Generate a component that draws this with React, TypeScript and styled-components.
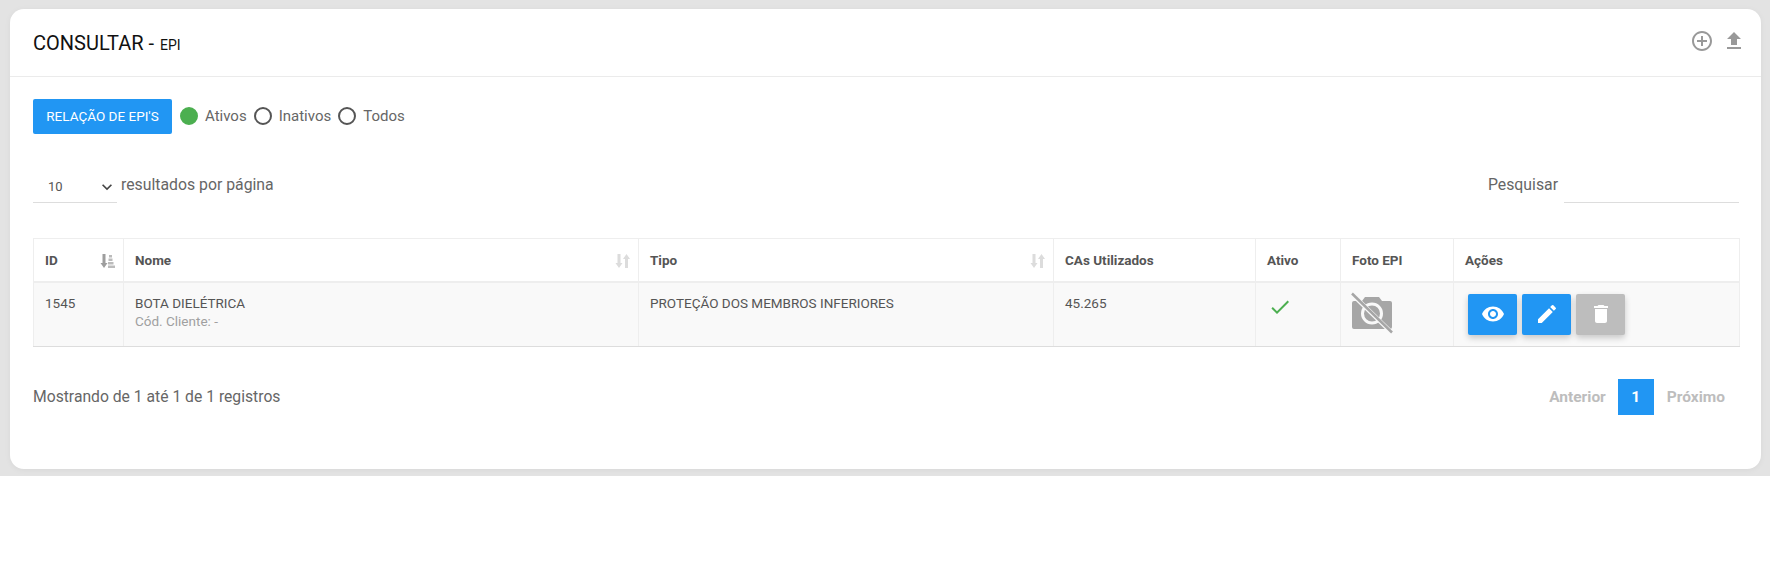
import React from "react";
import styled, { createGlobalStyle } from "styled-components";
import { MdAddCircleOutline, MdFileUpload, MdVisibility, MdEdit, MdDelete, MdCheck, MdKeyboardArrowDown } from "react-icons/md";

const GlobalStyle = createGlobalStyle`
  html, body {
    margin: 0;
    padding: 0;
    background: #ffffff;
  }
  body {
    font-family: Roboto, "Liberation Sans", sans-serif;
    color: #555555;
  }
  * {
    box-sizing: border-box;
  }
`;

const Page = styled.div`
  height: 476px;
  background: #e3e3e3;
  padding: 9px 9px 7px 10px;
`;

const Card = styled.div`
  height: 460px;
  background: #ffffff;
  border-radius: 14px;
  box-shadow: 0 1px 6px rgba(0, 0, 0, 0.05);
`;

const CardHeader = styled.div`
  height: 68px;
  padding: 0 15px 0 23px;
  display: flex;
  align-items: center;
  justify-content: space-between;
  border-bottom: 1px solid #ebebeb;
`;

const Title = styled.h1`
  margin: 0;
  font-size: 20px;
  font-weight: 400;
  color: #111111;

  small {
    margin-left: 1px;
    font-size: 14px;
  }
`;

const HeaderIcons = styled.div`
  display: flex;
  align-items: center;
  gap: 8px;
  margin-bottom: 3px;
  color: #999999;
`;

const CardBody = styled.div`
  padding: 21px 21px 0 23px;
`;

const FilterRow = styled.div`
  display: flex;
  align-items: center;
  height: 36px;
`;

const PrimaryButton = styled.button`
  width: 139px;
  height: 35px;
  margin-right: 8px;
  padding: 0;
  border: none;
  border-radius: 2px;
  background: #2196f3;
  color: #ffffff;
  font-family: inherit;
  font-size: 13.5px;
  font-weight: 400;
`;

const RadioOption = styled.label`
  display: flex;
  align-items: center;
  gap: 7px;
  margin-right: 7px;
  font-size: 15px;
  color: #666666;
`;

const RadioDot = styled.span<{ $checked?: boolean }>`
  width: 18px;
  height: 18px;
  border-radius: 50%;
  border: 2px solid ${(p) => (p.$checked ? "#4caf50" : "#555555")};
  background: ${(p) => (p.$checked ? "#4caf50" : "transparent")};
`;

const ControlsRow = styled.div`
  display: flex;
  justify-content: space-between;
  margin-top: 32px;
  height: 37px;
`;

const LengthControl = styled.div`
  display: flex;
  align-items: flex-start;
  font-size: 15.8px;
  color: #666666;
  line-height: 20px;
`;

const SelectBox = styled.div`
  width: 84px;
  height: 37px;
  margin-right: 4px;
  padding: 8px 0 0 15px;
  display: flex;
  justify-content: space-between;
  border-bottom: 1px solid #dddddd;
  font-size: 13px;
  line-height: 26px;
  color: #555555;
`;

const SelectArrow = styled.span`
  display: flex;
  align-items: center;
  height: 26px;
  color: #444444;
`;

const LengthText = styled.span`
  padding-top: 9px;
`;

const SearchControl = styled.div`
  display: flex;
  align-items: flex-start;
  margin-right: 1px;
  font-size: 15.8px;
  color: #666666;
  line-height: 20px;
`;

const SearchLabel = styled.span`
  padding-top: 9px;
  margin-right: 6px;
`;

const SearchInput = styled.div`
  width: 175px;
  height: 37px;
  border-bottom: 1px solid #dddddd;
`;

const Table = styled.table`
  width: 1706px;
  margin-top: 35px;
  border-collapse: collapse;
  table-layout: fixed;
`;

const HeadCell = styled.th<{ $width: number }>`
  position: relative;
  width: ${(p) => p.$width}px;
  height: 43px;
  padding: 0 11px;
  border: 1px solid #eeeeee;
  border-bottom: 2px solid #eeeeee;
  text-align: left;
  font-size: 13.5px;
  font-weight: 700;
  color: #555555;
  background: #ffffff;
`;

const SortMark = styled.span`
  position: absolute;
  right: 7px;
  top: 14px;
  display: flex;
`;

const BodyRow = styled.tr`
  background: #f9f9f9;
`;

const BodyCell = styled.td`
  height: 65px;
  padding: 11px 11px 0;
  vertical-align: top;
  border: 1px solid #eeeeee;
  border-bottom: 1px solid #dddddd;
  font-size: 13.5px;
  line-height: 18px;
  color: #555555;
`;

const SubText = styled.div`
  color: #a0a0a0;
`;

const CheckWrap = styled.div`
  color: #4caf50;
  margin: 1px 0 0 1px;
  display: flex;
`;

const PhotoWrap = styled.div`
  margin: -2px 0 0 -1px;
  display: flex;
`;

const ActionGroup = styled.div`
  display: flex;
  gap: 5px;
  margin-left: 3px;
`;

const ActionButton = styled.button<{ $disabled?: boolean }>`
  width: 49px;
  height: 41px;
  padding: 0;
  border: none;
  border-radius: 2px;
  display: flex;
  align-items: center;
  justify-content: center;
  color: #ffffff;
  background: ${(p) => (p.$disabled ? "#bdbdbd" : "#2196f3")};
  box-shadow: 0 3px 6px rgba(0, 0, 0, 0.2);
`;

const FooterRow = styled.div`
  display: flex;
  justify-content: space-between;
  align-items: center;
  margin-top: 32px;
  height: 36px;
`;

const InfoText = styled.div`
  margin-bottom: 2px;
  font-size: 15.7px;
  color: #666666;
`;

const Pager = styled.div`
  display: flex;
  align-items: center;
  margin-right: 15px;
  font-size: 15.5px;
  font-weight: 700;
  color: #bdbdbd;
`;

const PageNumber = styled.span`
  width: 36px;
  height: 36px;
  margin: 0 13px 0 12px;
  display: flex;
  align-items: center;
  justify-content: center;
  background: #2196f3;
  color: #ffffff;
`;

const SortIcon = ({ active }: { active?: boolean }) => (
  <svg width="16" height="16" viewBox="0 0 16 16" fill={active ? "#9e9e9e" : "#dcdcdc"}>
    <path d="M2.500 1h3v9h2L4 15 .5 10h2z" />
    {active ? (
      <path d="M9 2h3v2.500H9zM8.500 5.500h4V8h-4zM8 9h5.500v2.500H8zM8 12.500h7V15H8z" fill="#bbbbbb" />
    ) : (
      <path d="M10 15h3V6h2l-3.500-5L8 6h2z" />
    )}
  </svg>
);

const NoPhotoIcon = () => (
  <svg width="42" height="42" viewBox="0 0 42 42">
    <path
      d="M3 9h8l3-4h14l3 4h8a2 2 0 0 1 2 2v24a2 2 0 0 1-2 2H3a2 2 0 0 1-2-2V11a2 2 0 0 1 2-2z"
      fill="#a6a6a6"
    />
    <circle cx="21" cy="21.500" r="9.500" fill="none" stroke="#f9f9f9" strokeWidth="3" />
    <path d="M1 2l39 38" stroke="#f9f9f9" strokeWidth="4.500" />
    <path d="M1 1.500l40 39" stroke="#a6a6a6" strokeWidth="2.500" />
  </svg>
);

const App: React.FC = () => {
  return (
    <>
      <GlobalStyle />
      <Page>
        <Card>
          <CardHeader>
            <Title>
              CONSULTAR - <small>EPI</small>
            </Title>
            <HeaderIcons>
              <MdAddCircleOutline size={24} />
              <MdFileUpload size={24} />
            </HeaderIcons>
          </CardHeader>
          <CardBody>
            <FilterRow>
              <PrimaryButton>RELAÇÃO DE EPI'S</PrimaryButton>
              <RadioOption>
                <RadioDot $checked />
                Ativos
              </RadioOption>
              <RadioOption>
                <RadioDot />
                Inativos
              </RadioOption>
              <RadioOption>
                <RadioDot />
                Todos
              </RadioOption>
            </FilterRow>
            <ControlsRow>
              <LengthControl>
                <SelectBox>
                  10
                  <SelectArrow>
                    <MdKeyboardArrowDown size={20} />
                  </SelectArrow>
                </SelectBox>
                <LengthText>resultados por página</LengthText>
              </LengthControl>
              <SearchControl>
                <SearchLabel>Pesquisar</SearchLabel>
                <SearchInput />
              </SearchControl>
            </ControlsRow>
            <Table>
              <thead>
                <tr>
                  <HeadCell $width={90}>
                    ID
                    <SortMark>
                      <SortIcon active />
                    </SortMark>
                  </HeadCell>
                  <HeadCell $width={515}>
                    Nome
                    <SortMark>
                      <SortIcon />
                    </SortMark>
                  </HeadCell>
                  <HeadCell $width={415}>
                    Tipo
                    <SortMark>
                      <SortIcon />
                    </SortMark>
                  </HeadCell>
                  <HeadCell $width={202}>CAs Utilizados</HeadCell>
                  <HeadCell $width={85}>Ativo</HeadCell>
                  <HeadCell $width={113}>Foto EPI</HeadCell>
                  <HeadCell $width={286}>Ações</HeadCell>
                </tr>
              </thead>
              <tbody>
                <BodyRow>
                  <BodyCell>1545</BodyCell>
                  <BodyCell>
                    BOTA DIELÉTRICA
                    <SubText>Cód. Cliente: -</SubText>
                  </BodyCell>
                  <BodyCell>PROTEÇÃO DOS MEMBROS INFERIORES</BodyCell>
                  <BodyCell>45.265</BodyCell>
                  <BodyCell>
                    <CheckWrap>
                      <MdCheck size={24} />
                    </CheckWrap>
                  </BodyCell>
                  <BodyCell>
                    <PhotoWrap>
                      <NoPhotoIcon />
                    </PhotoWrap>
                  </BodyCell>
                  <BodyCell>
                    <ActionGroup>
                      <ActionButton>
                        <MdVisibility size={24} />
                      </ActionButton>
                      <ActionButton>
                        <MdEdit size={24} />
                      </ActionButton>
                      <ActionButton $disabled>
                        <MdDelete size={24} />
                      </ActionButton>
                    </ActionGroup>
                  </BodyCell>
                </BodyRow>
              </tbody>
            </Table>
            <FooterRow>
              <InfoText>Mostrando de 1 até 1 de 1 registros</InfoText>
              <Pager>
                Anterior
                <PageNumber>1</PageNumber>
                Próximo
              </Pager>
            </FooterRow>
          </CardBody>
        </Card>
      </Page>
    </>
  );
};

export default App;
